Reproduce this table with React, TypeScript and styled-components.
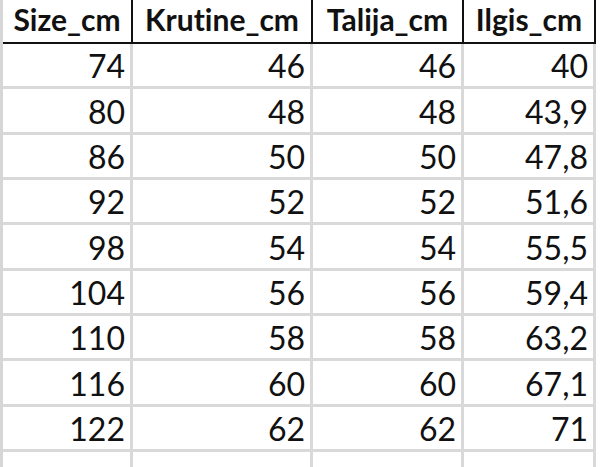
import React from "react"
import styled, { createGlobalStyle } from "styled-components"

const GlobalStyle = createGlobalStyle`
    html, body {
        margin: 0;
        padding: 0;
        background: #ffffff;
    }
    body {
        font-family: Lato, "Liberation Sans", sans-serif;
        font-variant-ligatures: none;
        color: #111111;
    }
`
const Sheet = styled.div`
    width: 600px;
    height: 467px;
    overflow: hidden;
    display: flex;
    background: #ffffff;
`
const Gutter = styled.div`
    width: 3px;
    flex-shrink: 0;
    background: #d6d6d6;
`
const Grid = styled.div`
    display: grid;
    grid-template-columns: 130px 180px 151px 132px 4px;
    grid-auto-rows: 45.33px;
    grid-template-rows: 44px;
    align-content: start;
`
const HeaderCell = styled.div`
    box-sizing: border-box;
    border-bottom: 2px solid #111111;
    border-right: 2px solid #111111;
    display: flex;
    align-items: center;
    justify-content: center;
    font-weight: 700;
    font-size: 30px;
    line-height: 1;
    padding-bottom: 4px;
    white-space: nowrap;
`
const Cell = styled.div`
    box-sizing: border-box;
    border-bottom: 3px solid #d9d9d9;
    border-right: 3px solid #d9d9d9;
    display: flex;
    align-items: flex-end;
    justify-content: flex-end;
    padding: 0 5px 4px 0;
    font-size: 32px;
    line-height: 1;
`
const Filler = styled.div`
    background: #ffffff;
`

const headers = ["Size_cm", "Krutine_cm", "Talija_cm", "Ilgis_cm"]
const rows = [
    ["74", "46", "46", "40"],
    ["80", "48", "48", "43,9"],
    ["86", "50", "50", "47,8"],
    ["92", "52", "52", "51,6"],
    ["98", "54", "54", "55,5"],
    ["104", "56", "56", "59,4"],
    ["110", "58", "58", "63,2"],
    ["116", "60", "60", "67,1"],
    ["122", "62", "62", "71"],
    ["", "", "", ""],
]

const App = () => {
    return <Sheet>
        <GlobalStyle />
        <Gutter />
        <Grid>
            {headers.map((h) => <HeaderCell key={h}>{h}</HeaderCell>)}
            <Filler />
            {rows.map((row, i) => (
                <React.Fragment key={`row-${i}`}>
                    {row.map((v, j) => <Cell key={`cell-${i}-${j}`}>{v}</Cell>)}
                    <Filler />
                </React.Fragment>
            ))}
        </Grid>
    </Sheet>
}

export default App
